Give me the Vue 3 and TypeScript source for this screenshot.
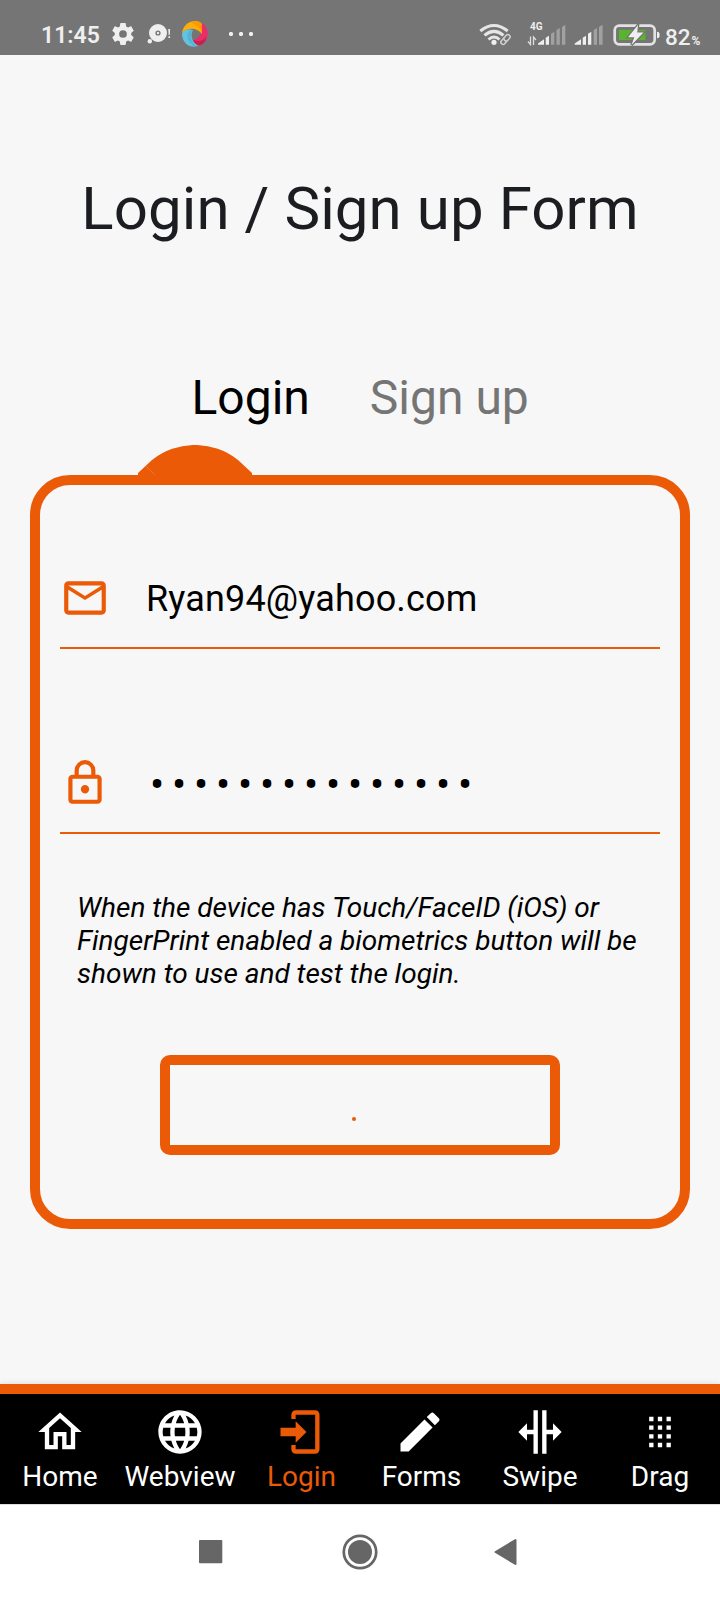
<script setup lang="ts">
import { ref } from 'vue'

interface Tab {
  label: string
  path: string
}

const activeTab = ref('Login')
const email = ref('Ryan94@yahoo.com')
const passwordLength = 15

const tabs: Tab[] = [
  { label: 'Home', path: 'M12,5.69L17,10.19V18H15V12H9V18H7V10.19L12,5.69M12,3L2,12H5V20H11V14H13V20H19V12H22' },
  {
    label: 'Webview',
    path: 'M16.36,14C16.44,13.34 16.5,12.68 16.5,12C16.5,11.32 16.44,10.66 16.36,10H19.74C19.9,10.64 20,11.31 20,12C20,12.69 19.9,13.36 19.74,14M14.59,19.56C15.19,18.45 15.65,17.25 15.97,16H18.92C17.96,17.65 16.43,18.93 14.59,19.56M14.34,14H9.66C9.56,13.34 9.5,12.68 9.5,12C9.5,11.32 9.56,10.65 9.66,10H14.34C14.43,10.65 14.5,11.32 14.5,12C14.5,12.68 14.43,13.34 14.34,14M12,19.96C11.17,18.76 10.5,17.43 10.09,16H13.91C13.5,17.43 12.83,18.76 12,19.96M8,8H5.08C6.03,6.34 7.57,5.06 9.4,4.44C8.8,5.55 8.35,6.75 8,8M5.08,16H8C8.35,17.25 8.8,18.45 9.4,19.56C7.57,18.93 6.03,17.65 5.08,16M4.26,14C4.1,13.36 4,12.69 4,12C4,11.31 4.1,10.64 4.26,10H7.64C7.56,10.66 7.5,11.32 7.5,12C7.5,12.68 7.56,13.34 7.64,14M12,4.03C12.83,5.23 13.5,6.57 13.91,8H10.09C10.5,6.57 11.17,5.23 12,4.03M18.92,8H15.97C15.65,6.75 15.19,5.55 14.59,4.44C16.43,5.07 17.96,6.34 18.92,8M12,2C6.47,2 2,6.5 2,12A10,10 0 0,0 12,22A10,10 0 0,0 22,12A10,10 0 0,0 12,2Z'
  },
  { label: 'Login', path: 'M10,17V14H3V10H10V7L15,12L10,17M10,2H19A2,2 0 0,1 21,4V20A2,2 0 0,1 19,22H10A2,2 0 0,1 8,20V18H10V20H19V4H10V6H8V4A2,2 0 0,1 10,2Z' },
  { label: 'Forms', path: 'M20.71,7.04C21.1,6.65 21.1,6 20.71,5.63L18.37,3.29C18,2.9 17.35,2.9 16.96,3.29L15.12,5.12L18.87,8.87M3,17.25V21H6.75L17.81,9.93L14.06,6.18L3,17.25Z' },
  { label: 'Swipe', path: 'M18,16V13H15V22H13V2H15V11H18V8L22,12L18,16M2,12L6,16V13H9V22H11V2H9V11H6V8L2,12Z' },
  { label: 'Drag', path: 'M7,19V17H9V19H7M11,19V17H13V19H11M15,19V17H17V19H15M7,15V13H9V15H7M11,15V13H13V15H11M15,15V13H17V15H15M7,11V9H9V11H7M11,11V9H13V11H11M15,11V9H17V11H15M7,7V5H9V7H7M11,7V5H13V7H11M15,7V5H17V7H15Z' }
]
</script>

<template>
  <div class="screen">
    <header class="status">
      <span class="clock">11:45</span>
      <svg class="cog" viewBox="2 2 20 20">
        <path d="M12,15.5A3.5,3.5 0 0,1 8.5,12A3.5,3.5 0 0,1 12,8.500A3.5,3.5 0 0,1 15.500,12A3.5,3.5 0 0,1 12,15.500M19.430,12.970C19.470,12.650 19.500,12.330 19.500,12C19.500,11.670 19.470,11.340 19.430,11L21.540,9.370C21.730,9.220 21.780,8.950 21.660,8.730L19.660,5.270C19.540,5.050 19.270,4.960 19.050,5.050L16.560,6.050C16.040,5.660 15.500,5.320 14.870,5.070L14.500,2.420C14.460,2.180 14.250,2 14,2H10C9.750,2 9.540,2.180 9.500,2.420L9.130,5.070C8.500,5.320 7.960,5.660 7.440,6.050L4.950,5.050C4.730,4.960 4.460,5.050 4.340,5.270L2.340,8.730C2.210,8.950 2.270,9.220 2.460,9.370L4.570,11C4.530,11.340 4.500,11.670 4.500,12C4.500,12.330 4.530,12.650 4.570,12.970L2.460,14.630C2.270,14.780 2.210,15.050 2.340,15.270L4.340,18.730C4.460,18.950 4.730,19.030 4.950,18.950L7.440,17.940C7.960,18.340 8.500,18.680 9.130,18.930L9.500,21.580C9.540,21.820 9.750,22 10,22H14C14.250,22 14.460,21.820 14.500,21.580L14.870,18.930C15.500,18.670 16.040,18.340 16.560,17.940L19.050,18.950C19.270,19.030 19.540,18.950 19.660,18.730L21.660,15.270C21.780,15.050 21.730,14.780 21.540,14.630L19.430,12.970Z" />
      </svg>
      <svg class="disc" viewBox="147 22 24 24">
        <circle cx="158" cy="33" r="5.800" fill="none" stroke="#efefef" stroke-width="6.400" />
        <circle cx="158" cy="33" r="1.200" />
        <circle cx="149.800" cy="41.300" r="2.200" />
        <path d="M168.300 29h1.800l-.3 6h-1.200zM168.400 36.200h1.700v1.900h-1.700z" />
      </svg>
      <svg class="swirl" viewBox="-13 -13 26 26">
        <path fill="#62c2df" d="M-13 0C-12-4-8-6-2-4C-5 1-3 8 3 12C-5 15-13 9-13 0Z" />
        <path fill="#45a5c4" d="M-6-3C-10 3-6 9 0 13H2C-4 8-6 1-2-4Z" opacity=".45" />
        <path fill="#ec2c69" d="M7-11C12-8 14-1 12 4C10 10 5 12 3 11C0 9-2 7-2 6C3 5 7 1 6-5Z" />
        <path fill="#c81f55" d="M-2 6C4 8 8 7 11 3C11 8 7 12 3 11C0 10-1 8-2 6Z" />
        <path fill="#fcae0b" d="M-13-1C-12-8-7-13 0-13C4-13 7-11 7-9V0C4-4-1-6-5-5C-9-5-11-3-13-1Z" />
        <path fill="#ff9800" d="M-4-12C1-14 7-12 7-9V0C6-6 1-9-4-12Z" />
      </svg>
      <svg class="more" viewBox="0 0 24 4"><path d="M1 0h2l1 1v2l-1 1H1L0 3V1zM11 0h2l1 1v2l-1 1h-2l-1-1V1zM21 0h2l1 1v2l-1 1h-2l-1-1V1z" /></svg>
      <svg class="wifi" viewBox="479 22 33 25">
        <g fill="none" stroke="#e6e6e6" stroke-width="3">
          <path d="M480.300 31Q494 20 507.700 31" />
          <path d="M484.500 35.300Q494 27.500 503.500 35.300" />
          <path d="M488.500 39.500Q494 34.500 499.500 39.500" />
        </g>
        <circle cx="494" cy="42.300" r="2.600" />
        <g fill="#757575" stroke="#d0d0d0" stroke-width="1.500" transform="rotate(-48 505.500 39.500)">
          <rect x="499.700" y="37.300" width="7" height="4.400" rx="2.200" />
          <rect x="504.300" y="37.300" width="7" height="4.400" rx="2.200" />
        </g>
      </svg>
      <div class="mobile">
        <span class="net">4G</span>
        <svg class="signal-data" viewBox="527 24 39 22">
          <path fill="none" stroke="#dedede" stroke-width="1.300" d="M530.500 36.500v8l-2.500-3M533.500 45v-8l2.500 3" />
          <path d="M538 44.700V43.500l6-4.200v5.400zM545.700 44.700v-7l3.300-2v9z" />
          <path fill="#a1a1a1" d="M551 44.700V33.800l3.300-2v12.900zM556.500 44.700V30l3.300-2v16.700zM562 44.700V27l3.300-2.200v19.900z" />
        </svg>
      </div>
      <svg class="signal" viewBox="574 24 29 22">
        <path d="M574.700 44.700V43.500l6.300-4.200v5.400zM582.700 44.700v-7l3.300-2v9zM588 44.700V33.800l3.300-2v12.900z" />
        <path fill="#a1a1a1" d="M593.700 44.700V30l3.300-2v16.700zM599 44.700V27l3.600-2.200v19.900z" />
      </svg>
      <svg class="battery" viewBox="613 23 47 24">
        <rect x="614.700" y="25.700" width="40" height="18.600" rx="4.500" fill="none" stroke="#e2e2e2" stroke-width="2.700" />
        <path fill="#59b52b" d="M619 30h26.500v10H619z" />
        <path d="M657 31.700q2.500 0 2.500 2v2.600q0 2-2.500 2z" />
        <path stroke="#757575" stroke-width="2.600" paint-order="stroke" d="M638 25 628 37.300h6.300L631.500 45 643.500 32.500h-6.300z" />
      </svg>
      <span class="charge">82<small>%</small></span>
    </header>

    <main class="content">
      <h1 class="title">Login / Sign up Form</h1>
      <div class="switcher">
        <span class="mode current">Login</span>
        <span class="mode">Sign up</span>
      </div>
      <svg class="marker" viewBox="0 0 114 30">
        <path d="M0 30V28L14 15A69 69 0 0 1 100 15L114 28V30Z" />
        <path d="M8 21 17 30" stroke="#f08a50" stroke-width=".6" />
      </svg>
      <section class="card">
        <div class="field mail">
          <svg class="field-icon" viewBox="0 0 24 24"><path d="M22 6C22 4.900 21.100 4 20 4H4C2.900 4 2 4.900 2 6V18C2 19.100 2.900 20 4 20H20C21.100 20 22 19.100 22 18V6M20 6L12 11L4 6H20M20 18H4V8L12 13L20 8V18Z" /></svg>
          <span class="value">{{ email }}</span>
        </div>
        <div class="field secret">
          <svg class="field-icon" viewBox="0 0 24 24"><path d="M12,17C10.890,17 10,16.100 10,15C10,13.890 10.890,13 12,13A2,2 0 0,1 14,15A2,2 0 0,1 12,17M18,20V10H6V20H18M18,8A2,2 0 0,1 20,10V20A2,2 0 0,1 18,22H6C4.890,22 4,21.100 4,20V10C4,8.890 4.890,8 6,8H7V6A5,5 0 0,1 12,1A5,5 0 0,1 17,6V8H18M12,3A3,3 0 0,0 9,6V8H15V6A3,3 0 0,0 12,3Z" /></svg>
          <span class="bullets"><i v-for="n in passwordLength" :key="n">•</i></span>
        </div>
        <p class="hint">When the device has Touch/FaceID (iOS) or FingerPrint enabled a biometrics button will be shown to use and test the login.</p>
        <button class="submit" type="button" aria-label="Login"><span class="speck"></span></button>
      </section>
    </main>

    <nav class="tabs">
      <a v-for="tab in tabs" :key="tab.label" class="tab" :class="[tab.label.toLowerCase(), { active: tab.label === activeTab }]" @click="activeTab = tab.label">
        <svg class="tab-icon" viewBox="0 0 24 24"><path :d="tab.path" /></svg>
        <span class="tab-label">{{ tab.label }}</span>
      </a>
    </nav>

    <footer class="system">
      <svg class="recent-key" viewBox="0 0 24 24"><rect width="23.300" height="23.300" rx="1" /></svg>
      <svg class="home-key" viewBox="-18 -18 36 36"><circle r="16.200" fill="none" stroke="#666" stroke-width="2.700" /><circle r="12" /></svg>
      <svg class="back-key" viewBox="0 0 23 28"><path d="M21.500 2v24L1.500 14Z" stroke="#666" stroke-width="2" stroke-linejoin="round" /></svg>
    </footer>
  </div>
</template>

<style>
body {
  margin: 0;
}
</style>

<style scoped>
* {
  box-sizing: border-box;
}
.screen {
  width: 720px;
  height: 1600px;
  display: flex;
  flex-direction: column;
  background: #f7f7f7;
  font-family: Roboto, sans-serif;
  overflow: hidden;
}
svg {
  display: block;
  flex: none;
}
.status {
  height: 55px;
  flex: none;
  display: flex;
  align-items: flex-start;
  padding-left: 41px;
  background: #757575;
  color: #efefef;
  fill: #efefef;
}
.clock {
  width: 71px;
  margin-top: 23px;
  font-size: 23px;
  line-height: 26px;
  font-weight: 600;
}
.cog {
  width: 22px;
  height: 22px;
  margin-top: 23px;
}
.disc {
  width: 24px;
  height: 24px;
  margin: 22px 0 0 13px;
}
.swirl {
  width: 26px;
  height: 26px;
  margin: 21px 0 0 11px;
}
.more {
  width: 24px;
  height: 4px;
  margin: 32px 0 0 21px;
}
.wifi {
  width: 33px;
  height: 25px;
  margin: 22px 0 0 226px;
}
.mobile {
  position: relative;
  width: 39px;
  height: 22px;
  margin: 24px 0 0 15px;
}
.net {
  position: absolute;
  left: 3px;
  top: -3px;
  font-size: 10px;
  line-height: 12px;
  font-weight: 700;
}
.signal-data {
  width: 39px;
  height: 22px;
}
.signal {
  width: 29px;
  height: 22px;
  margin: 24px 0 0 8px;
}
.battery {
  width: 47px;
  height: 24px;
  margin: 23px 0 0 10px;
}
.charge {
  margin: 23.500px 0 0 5px;
  font-size: 22.500px;
  line-height: 26px;
  font-weight: 500;
  white-space: nowrap;
}
.charge small {
  margin-left: 1px;
  font-size: 12px;
  font-weight: 700;
}
.content {
  height: 1329px;
  flex: none;
  display: flex;
  flex-direction: column;
}
.title {
  margin: 119px 0 0;
  height: 70px;
  line-height: 70px;
  font-size: 60px;
  font-weight: 400;
  letter-spacing: 0.08px;
  text-align: center;
  color: #1c1d21;
  white-space: nowrap;
}
.switcher {
  display: flex;
  gap: 60px;
  height: 56px;
  margin-top: 126px;
  padding-left: 191.500px;
  font-size: 48px;
  line-height: 56px;
  white-space: nowrap;
}
.mode {
  color: #757575;
}
.current {
  color: #000;
}
.marker {
  width: 114px;
  height: 30px;
  margin: 19px 0 0 138px;
  fill: #ea5a07;
}
.card {
  width: 660px;
  height: 754px;
  margin-left: 30px;
  padding: 0 20px;
  border: 10px solid #ea5a07;
  border-radius: 40px;
}
.field {
  display: flex;
  align-items: center;
  border-bottom: 2px solid #ea5a07;
}
.mail {
  height: 104px;
  margin-top: 60px;
  padding-top: 4px;
}
.secret {
  height: 104px;
  margin-top: 81px;
  padding-top: 4px;
}
.field-icon {
  width: 50px;
  height: 50px;
  fill: #ea5a07;
}
.value {
  margin-left: 36px;
  padding-top: 1px;
  font-size: 36px;
  line-height: 42px;
  letter-spacing: 0.16px;
  color: #000;
}
.bullets {
  display: flex;
  margin-left: 36px;
  padding-top: 3px;
  font-size: 42px;
  line-height: 42px;
  color: #000;
}
.bullets i {
  width: 22px;
  font-style: normal;
  text-align: center;
}
.hint {
  width: 575px;
  margin: 57px 0 0 17px;
  font-size: 28px;
  line-height: 33px;
  font-style: italic;
  letter-spacing: -0.02px;
  color: #000;
}
.submit {
  display: flex;
  align-items: flex-end;
  width: 400px;
  height: 100px;
  margin: 65px 0 0 100px;
  padding: 0 0 24px 182px;
  border: 10px solid #ea5a07;
  border-radius: 10px;
  background: transparent;
}
.speck {
  width: 4px;
  height: 4px;
  border-radius: 50%;
  background: #ea5a07;
}
.tabs {
  height: 120px;
  flex: none;
  display: flex;
  border-top: 10px solid #ea5a07;
  background: #000;
  box-shadow: 0 0 6px rgba(0, 0, 0, 0.12);
}
.tab {
  width: 120px;
  display: flex;
  flex-direction: column;
  align-items: center;
  color: #fff;
  fill: #fff;
}
.active {
  color: #ea5a07;
  fill: #ea5a07;
}
.tab-icon {
  width: 52px;
  height: 52px;
  margin-top: 11.500px;
}
.tab-label {
  font-size: 28px;
  line-height: 32px;
  margin-top: 3.500px;
}
.login .tab-label,
.forms .tab-label {
  padding-left: 3px;
}
.system {
  height: 96px;
  flex: none;
  display: flex;
  align-items: center;
  padding-bottom: 1px;
  border-top: 1px solid #dedede;
  background: #fff;
  fill: #666;
}
.recent-key {
  width: 24px;
  height: 24px;
  margin-left: 199px;
}
.home-key {
  width: 36px;
  height: 36px;
  margin-left: 118.500px;
}
.back-key {
  width: 23px;
  height: 28px;
  margin-left: 116.500px;
}
</style>
